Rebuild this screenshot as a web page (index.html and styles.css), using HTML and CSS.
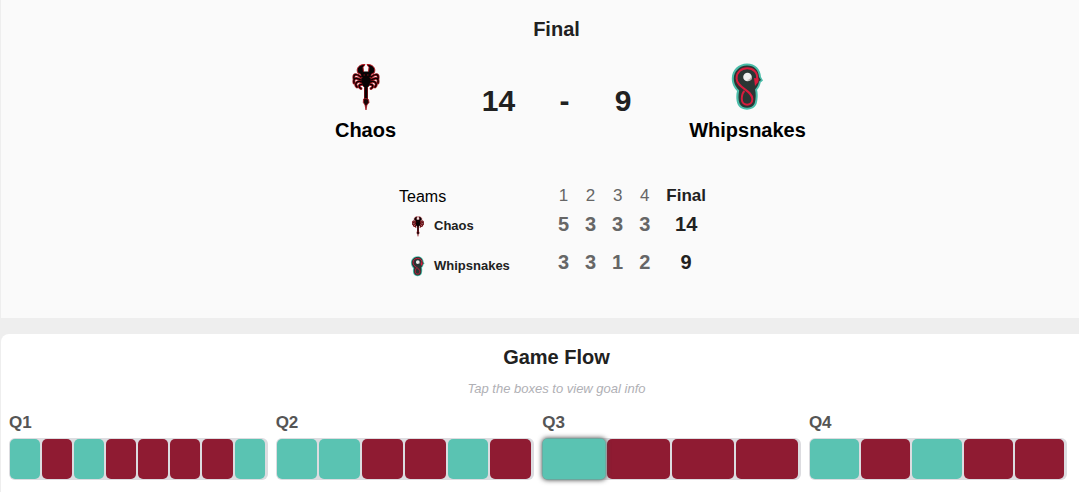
FILE: index.html
```html
<!DOCTYPE html>
<html lang="en">
<head>
<meta charset="utf-8">
<title>Chaos vs Whipsnakes</title>
<link rel="stylesheet" href="styles.css">
</head>
<body>
<svg class="defs" aria-hidden="true">
  <symbol id="chaos" viewBox="3 6 46 50">
    <g fill="none" stroke-linecap="round" stroke-linejoin="round">
      <g stroke="#a3141d" stroke-width="2.8">
        <path d="M21 22C16 18 13 19 14 24M21 25C16 22 13 23 14 28M22 27C17 25 14 29 17 32M22 29.5C19 29 18 32 21 33.500M31 22C36 18 39 19 38 24M31 25C36 22 39 23 38 28M30 27C35 25 38 29 35 32M30 29.500C33 29 34 32 31 33.500"/>
        <path d="M26 29V46" stroke-width="4"/>
      </g>
      <g stroke="#080304" stroke-width="1.2">
        <path d="M21 22C16 18 13 19 14 24M21 25C16 22 13 23 14 28M22 27C17 25 14 29 17 32M22 29.5C19 29 18 32 21 33.500M31 22C36 18 39 19 38 24M31 25C36 22 39 23 38 28M30 27C35 25 38 29 35 32M30 29.500C33 29 34 32 31 33.500"/>
        <path d="M26 28V46" stroke-width="2.8"/>
      </g>
    </g>
    <path d="M25 9.500C19 9 15.500 14 18 18L22 20L23.500 17L23 12.500ZM27 9.500C33 9 36.500 14 34 18L30 20L28.500 17L29 12.500Z" fill="#080304" stroke="#b3151f" stroke-width="1"/>
    <path d="M21 18L24 16.500H28L31 18L30.500 27L28.500 32H23.500L21.500 27Z" fill="#080304"/>
    <path d="M23.500 20H25M27 20H28.500M21 22.500H22.500M29.500 22.500H31" stroke="#b3151f" stroke-width=".7"/>
    <path d="M23.500 44L26 43.500L28.500 44.500L29 47.500L26.900 50L26 55L25 50L23.300 47.500Z" fill="#180507" stroke="#b3151f" stroke-width=".8"/>
  </symbol>
  <symbol id="whips" viewBox="9 6 46 50">
    <path d="M31 8.500C22.500 8.500 15.800 15 15.800 23.500C15.800 29.500 18.500 33 21 36C20 40 20 45 21.500 49C24.500 56.500 37.500 56.500 40.500 49C42 44 42 38 41 35C43 33 44.300 30 44.600 27.500L47 25.500L45 22C44.500 14 39.500 8.500 31 8.500Z" fill="#4abda9"/>
    <path d="M31 10.500C23.500 10.500 17.800 16.500 17.800 23.500C17.800 29 20.500 32.500 23.200 35.500C22.200 40 22.200 45 23.500 48.200C26 54.200 36.200 54.200 38.700 48.200C40 44 40 38 39 34.500C41.500 32 42.700 29 43 26.500L45 25L43 22C42.500 15 38.500 10.500 31 10.500Z" fill="#2b3634"/>
    <path d="M41 24C42 17.500 37.500 13.300 31.200 13.300C25 13.300 20.500 17.500 20.600 23.500C20.700 33 36.200 35 36.400 44C36.400 51.500 25.800 51.500 25.800 44C25.800 41 26.200 38 28.500 36" fill="none" stroke="#d91c3d" stroke-width="2"/>
    <path d="M38 23L42.800 23.500L42.300 27L39 31Z" fill="#d91c3d"/>
    <circle cx="31.500" cy="22" r="4.300" fill="#efefef"/>
    <path d="M31 25Q34 25 35 22L36 24Q34 27 31 25Z" fill="#b5aaa8"/>
  </symbol>
</svg>
<main class="page">
  <section class="score-panel">
    <h2 class="status">Final</h2>
    <div class="matchup">
      <div class="team"><svg class="logo"><use href="#chaos"/></svg><span>Chaos</span></div>
      <div class="score"><span>14</span><span>-</span><span>9</span></div>
      <div class="team"><svg class="logo"><use href="#whips"/></svg><span>Whipsnakes</span></div>
    </div>
    <div class="box-score">
      <div class="row head"><span class="label">Teams</span><span>1</span><span>2</span><span>3</span><span>4</span><b>Final</b></div>
      <div class="row"><span class="name"><svg class="mini"><use href="#chaos"/></svg>Chaos</span><span>5</span><span>3</span><span>3</span><span>3</span><b>14</b></div>
      <div class="row last"><span class="name"><svg class="mini"><use href="#whips"/></svg>Whipsnakes</span><span>3</span><span>3</span><span>1</span><span>2</span><b>9</b></div>
    </div>
  </section>
  <section class="flow-panel">
    <h2 class="flow-title">Game Flow</h2>
    <p class="hint">Tap the boxes to view goal info</p>
    <div class="quarters">
      <div class="quarter"><h3>Q1</h3><div class="track"><i class="w"></i><i class="c"></i><i class="w"></i><i class="c"></i><i class="c"></i><i class="c"></i><i class="c"></i><i class="w"></i></div></div>
      <div class="quarter"><h3>Q2</h3><div class="track"><i class="w"></i><i class="w"></i><i class="c"></i><i class="c"></i><i class="w"></i><i class="c"></i></div></div>
      <div class="quarter"><h3>Q3</h3><div class="track"><i class="w active"></i><i class="c"></i><i class="c"></i><i class="c"></i></div></div>
      <div class="quarter"><h3>Q4</h3><div class="track"><i class="w"></i><i class="c"></i><i class="w"></i><i class="c"></i><i class="c"></i></div></div>
    </div>
  </section>
</main>
</body>
</html>
```
FILE: styles.css
```css
* { box-sizing: border-box; }
body { margin: 0; background: #eee; color: #212121; font-family: "Liberation Sans", Arial, sans-serif; overflow: hidden; }
h2, h3, p { margin: 0; }
.defs { display: none; }
.page { width: 1111px; margin-left: 1px; }
.score-panel { height: 318px; padding-top: 17px; background: #fafafa; }
.status { font-size: 20px; line-height: 24px; text-align: center; }
.matchup { display: grid; grid-template-columns: 130px 183px 130px; width: 512px; margin: 20px auto 0; justify-content: space-between; }
.team { display: flex; flex-direction: column; align-items: center; color: #000; font-size: 20px; font-weight: 700; line-height: 24px; }
.logo { width: 46px; height: 50px; margin-bottom: 7px; }
.score { display: grid; grid-template-columns: 67px 65px 52px; padding-top: 22px; text-align: center; font-size: 30px; font-weight: 700; line-height: 36px; }
.box-score { width: 315px; margin: 42px 0 0 398px; }
.row { display: grid; grid-template-columns: 151px 27px 27px 27.3px 27px 55.7px; height: 38px; color: #666; font-size: 20px; font-weight: 700; line-height: 24px; text-align: center; }
.row b { color: #212121; }
.head { height: 28px; font-size: 17px; font-weight: 400; }
.label { color: #000; font-size: 16px; line-height: 26px; text-align: left; }
.name { display: flex; align-items: center; gap: 6px; height: 28px; padding-left: 9px; color: #212121; font-size: 13px; }
.last .name { height: 31px; }
.mini { width: 20px; height: 22px; }
.flow-panel { height: 158px; margin-top: 16px; padding: 11px 8px 0; border-radius: 8px 8px 0 0; background: #fff; }
.flow-title { font-size: 20px; line-height: 24px; text-align: center; }
.hint { margin-top: 11px; color: #b0b0b5; font-size: 13px; font-style: italic; line-height: 18px; text-align: center; }
.quarters { display: grid; grid-template-columns: repeat(4, 258.64px); column-gap: 8px; margin-top: 14px; }
.quarter h3 { color: #555; font-size: 17px; line-height: 21px; }
.quarter:last-child { width: 258.3px; }
.track { display: flex; height: 42px; margin-top: 5px; padding: 1px; border-radius: 6px; background: #dcdce0; }
.track i { flex: 1; margin-right: 2px; border-radius: 5px; }
.w { background: #5ac3b2; }
.c { background: #8f1b32; }
.track .active { box-shadow: 0 0 5px #444; transform: scale(1.02); }
```
